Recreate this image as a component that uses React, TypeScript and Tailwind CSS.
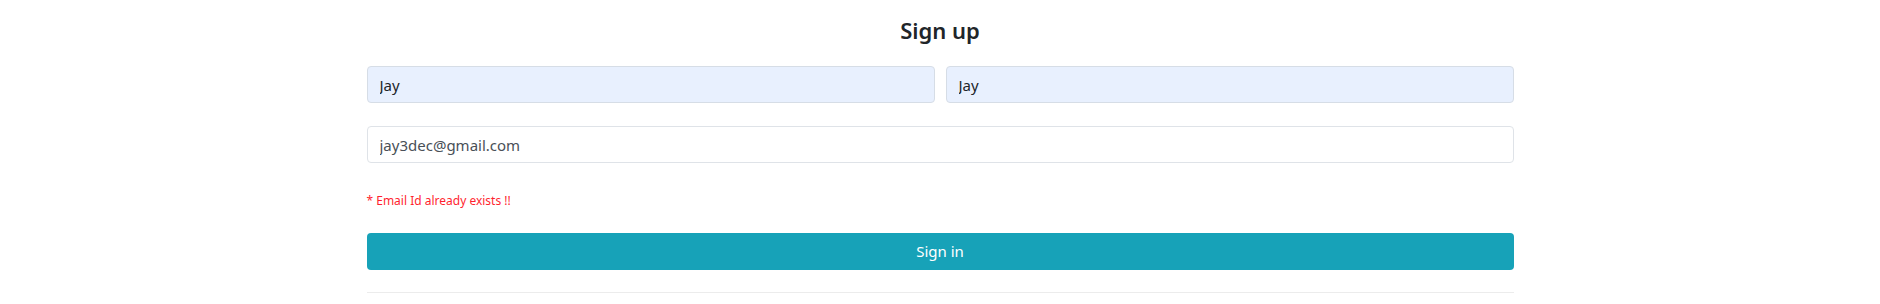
import React from "react";

export default function App() {
  return (
    <div
      className="w-full h-[304px] bg-white"
      style={{ fontFamily: '"Noto Sans", "Open Sans", sans-serif' }}
    >
      <div className="w-[1147px] mx-auto pt-[15px]">
        <h3 className="text-[22px] leading-[30px] font-semibold text-[#212529] text-center mb-[21px]">
          Sign up
        </h3>
        <div className="flex gap-[11px] mb-[23px]">
          <input
            defaultValue="Jay"
            className="flex-1 min-w-0 h-[37px] px-[12px] text-[15px] text-[#212529] bg-[#e8f0fe] border border-[#d6dde6] rounded-[4px] outline-none"
          />
          <input
            defaultValue="Jay"
            className="flex-1 min-w-0 h-[37px] px-[12px] text-[15px] text-[#212529] bg-[#e8f0fe] border border-[#d6dde6] rounded-[4px] outline-none"
          />
        </div>
        <input
          defaultValue="jay3dec@gmail.com"
          className="block w-full h-[37px] px-[12px] text-[15px] text-[#495057] bg-white border border-[#dfe3e8] rounded-[4px] outline-none mb-[28px]"
        />
        <p className="text-[12px] leading-[19px] text-[#ff1f2f] mb-[23px]">
          * Email Id already exists !!
        </p>
        <button className="block w-full h-[37px] bg-[#17a2b8] text-white text-[15px] rounded-[4px]">
          Sign in
        </button>
        <div className="mt-[22px] border-t border-[#ececec]" />
      </div>
    </div>
  );
}
